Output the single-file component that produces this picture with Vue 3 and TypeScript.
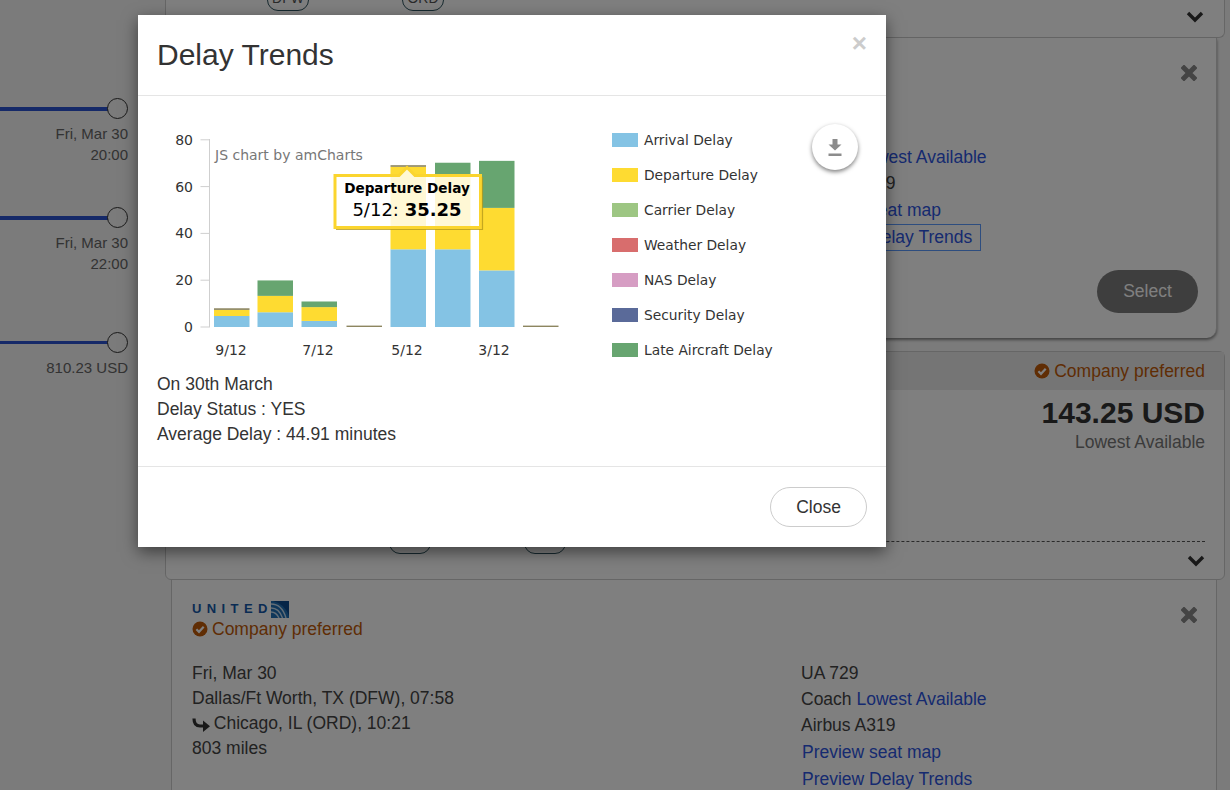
<script setup lang="ts">
interface Segment { value: number; color: string }
interface Bar { x: number; segments: Segment[] }

const BLUE = '#84c3e4'
const YELLOW = '#fedb31'
const GREEN = '#67a570'
const THIN = '#8d8660'

const baseY = 327
const scale = 2.34

const bars: Bar[] = [
	{ x: 214, segments: [{ value: 4.7, color: BLUE }, { value: 2.6, color: YELLOW }, { value: 0.7, color: THIN }] },
	{ x: 257.5, segments: [{ value: 6.3, color: BLUE }, { value: 7, color: YELLOW }, { value: 6.6, color: GREEN }] },
	{ x: 301.5, segments: [{ value: 2.6, color: BLUE }, { value: 5.9, color: YELLOW }, { value: 2.4, color: GREEN }] },
	{ x: 346.5, segments: [{ value: 0.6, color: THIN }] },
	{ x: 390.5, segments: [{ value: 33.2, color: BLUE }, { value: 35.25, color: YELLOW }, { value: 0.7, color: THIN }] },
	{ x: 435, segments: [{ value: 33.2, color: BLUE }, { value: 31.3, color: YELLOW }, { value: 5.7, color: GREEN }] },
	{ x: 479, segments: [{ value: 24.2, color: BLUE }, { value: 26.7, color: YELLOW }, { value: 20.1, color: GREEN }] },
	{ x: 523, segments: [{ value: 0.6, color: THIN }] },
]

function barRects(bar: Bar) {
	let used = 0
	return bar.segments.map((s) => {
		const height = s.value * scale
		used += height
		return { y: baseY - used, height, color: s.color }
	})
}

const yTicks = [0, 20, 40, 60, 80]
const xLabels = [
	{ x: 231, text: '9/12' },
	{ x: 318, text: '7/12' },
	{ x: 407, text: '5/12' },
	{ x: 494, text: '3/12' },
]

const legend = [
	{ name: 'Arrival Delay', color: BLUE },
	{ name: 'Departure Delay', color: YELLOW },
	{ name: 'Carrier Delay', color: '#9dc683' },
	{ name: 'Weather Delay', color: '#d86d6d' },
	{ name: 'NAS Delay', color: '#d69dc3' },
	{ name: 'Security Delay', color: '#5a6a99' },
	{ name: 'Late Aircraft Delay', color: GREEN },
]

const stops = [
	{ lines: ['Fri, Mar 30', '20:00'], cls: 'first' },
	{ lines: ['Fri, Mar 30', '22:00'], cls: 'second' },
	{ lines: ['810.23 USD'], cls: 'third' },
]
</script>

<template>
	<div class="page">
		<div class="timeline">
			<div v-for="stop in stops" :key="stop.lines.join()" class="stop" :class="stop.cls">
				<div class="track">
					<span class="line"></span>
					<span class="dot"></span>
				</div>
				<div v-for="l in stop.lines" :key="l" class="stop-label">{{ l }}</div>
			</div>
		</div>

		<div class="results">
			<section class="fare fare-top">
				<div class="fare-foot no-dash">
					<div class="route route-top">
						<span class="pill">DFW</span>
						<span class="connector"></span>
						<span class="pill">ORD</span>
					</div>
					<svg class="chevron" viewBox="0 0 18 12"><path d="M2 2 L9 9 L16 2" /></svg>
				</div>
			</section>

			<section class="detail detail-open">
				<div class="detail-head">
					<div class="brand-col"></div>
					<svg class="remove" viewBox="0 0 16 16"><path d="M3 3 L13 13 M13 3 L3 13" /></svg>
				</div>
				<div class="detail-cols">
					<div class="leg-col"></div>
					<div class="info-col">
						<div class="info-row">UA 1120</div>
						<div class="info-row">Coach <a class="link">Lowest Available</a></div>
						<div class="info-row">Airbus A319</div>
						<div class="link-row first-link"><a class="link block">Preview seat map</a></div>
						<div class="link-row"><a class="link block focused">Preview Delay Trends</a></div>
					</div>
				</div>
				<div class="actions"><button class="select">Select</button></div>
			</section>

			<section class="fare fare-mid">
				<div class="fare-head">
					<svg class="check" viewBox="0 0 16 16"><circle cx="8" cy="8" r="7.5" /><path d="M4.4 8.2 L7 10.8 L11.7 5.8" /></svg>
					<span>Company preferred</span>
				</div>
				<div class="price">143.25 USD</div>
				<div class="price-note">Lowest Available</div>
				<div class="fare-foot">
					<div class="route route-mid">
						<span class="pill">DFW</span>
						<span class="connector"></span>
						<span class="pill">ORD</span>
					</div>
					<svg class="chevron" viewBox="0 0 18 12"><path d="M2 2 L9 9 L16 2" /></svg>
				</div>
			</section>

			<section class="detail">
				<div class="detail-head">
					<div class="brand-col">
						<div class="brand">
							<span class="brand-name">UNITED</span>
							<svg class="globe" viewBox="0 0 18 17">
								<rect width="18" height="17" fill="#1f6fb5" />
								<path d="M0 3 Q11 3 15 17 M0 7 Q8 7 11.5 17 M0 11 Q5 11 8 17" fill="none" stroke="#c6dcee" stroke-width="1.4" />
								<path d="M2 0 L18 0 L18 15 Q14 3 2 0 Z" fill="#0d4a8e" />
							</svg>
						</div>
						<div class="preferred">
							<svg class="check" viewBox="0 0 16 16"><circle cx="8" cy="8" r="7.5" /><path d="M4.4 8.2 L7 10.8 L11.7 5.8" /></svg>
							<span>Company preferred</span>
						</div>
					</div>
					<svg class="remove" viewBox="0 0 16 16"><path d="M3 3 L13 13 M13 3 L3 13" /></svg>
				</div>
				<div class="detail-cols">
					<div class="leg-col">
						<div class="leg-row">Fri, Mar 30</div>
						<div class="leg-row">Dallas/Ft Worth, TX (DFW), 07:58</div>
						<div class="leg-row">
							<svg class="turn" viewBox="0 0 18 14"><path class="turn-line" d="M2 0.5 Q2 8 8 8 L12 8" /><path class="turn-head" d="M11 2.5 L18 8.3 L11 14 Z" /></svg>
							Chicago, IL (ORD), 10:21
						</div>
						<div class="leg-row">803 miles</div>
					</div>
					<div class="info-col">
						<div class="info-row">UA 729</div>
						<div class="info-row">Coach <a class="link">Lowest Available</a></div>
						<div class="info-row">Airbus A319</div>
						<div class="link-row first-link"><a class="link block">Preview seat map</a></div>
						<div class="link-row"><a class="link block">Preview Delay Trends</a></div>
					</div>
				</div>
			</section>
		</div>

		<div class="backdrop"></div>

		<div class="modal-wrap">
			<div class="modal">
				<header class="modal-head">
					<h4>Delay Trends</h4>
					<span class="modal-x">×</span>
				</header>
				<div class="modal-body">
					<div class="chart-row">
						<svg class="chart" viewBox="157 125 440 240" width="440" height="240">
							<g v-for="t in yTicks" :key="t">
								<line x1="200.5" x2="210" :y1="baseY - t * scale" :y2="baseY - t * scale" stroke="#cfcfcf" />
								<text x="193" :y="baseY - t * scale + 5" text-anchor="end" class="tick">{{ t }}</text>
							</g>
							<line x1="209.5" x2="209.5" y1="139" y2="327" stroke="#cfcfcf" />
							<g v-for="(bar, i) in bars" :key="i">
								<rect
									v-for="(r, j) in barRects(bar)"
									:key="j"
									:x="bar.x"
									:y="r.y"
									width="35.5"
									:height="r.height"
									:fill="r.color"
								/>
							</g>
							<text v-for="l in xLabels" :key="l.text" :x="l.x" y="355" text-anchor="middle" class="tick">{{ l.text }}</text>
							<text x="215" y="160" class="credit">JS chart by amCharts</text>

							<path
								d="M335 175.5 L399 175.5 L407 167.5 L415 175.5 L480.5 175.5 L480.5 227.5 L335 227.5 Z"
								fill="#ffffff"
								fill-opacity="0.8"
								stroke="#fbd52e"
								stroke-width="3"
							/>
							<path d="M482.5 177 L482.5 229.5 L336 229.5" fill="none" stroke="#b59a1c" stroke-width="1.2" opacity="0.8" />
							<text x="407" y="193" text-anchor="middle" class="tip-title">Departure Delay</text>
							<text x="407" y="216" text-anchor="middle" class="tip-value">5/12: <tspan class="tip-strong">35.25</tspan></text>
						</svg>
						<ul class="legend">
							<li v-for="item in legend" :key="item.name">
								<span class="swatch" :style="{ background: item.color }"></span>
								<span>{{ item.name }}</span>
							</li>
						</ul>
						<button class="download" aria-label="Download">
							<svg viewBox="0 0 14 17" width="14" height="17">
								<path d="M4.5 0 H9.5 V5.5 H13.5 L7 11.5 L0.5 5.5 H4.5 Z" fill="#8c8c8c" />
								<rect x="0.5" y="14.5" width="13" height="2.5" fill="#8c8c8c" />
							</svg>
						</button>
					</div>
					<div class="status">
						<div>On 30th March</div>
						<div>Delay Status : YES</div>
						<div>Average Delay : 44.91 minutes</div>
					</div>
				</div>
				<footer class="modal-foot">
					<button class="close-btn">Close</button>
				</footer>
			</div>
		</div>
	</div>
</template>

<style>
html, body {
	margin: 0;
	background: #f6f6f6;
}
</style>

<style scoped>
.page {
	position: relative;
	display: flex;
	width: 1230px;
	height: 790px;
	overflow: hidden;
	font-family: "Liberation Sans", Arial, sans-serif;
	font-size: 17.5px;
	color: #333;
	background: #f6f6f6;
}

/* Left timeline */
.timeline {
	width: 128px;
	padding-top: 98px;
	flex: none;
}
.stop.first { height: 109px; }
.stop.second { height: 125px; }
.track {
	display: flex;
	align-items: center;
	height: 21px;
}
.line {
	flex: 1;
	height: 4px;
	background: #2a52d0;
}
.third .line { height: 3px; }
.dot {
	width: 21px;
	height: 21px;
	box-sizing: border-box;
	border: 1.5px solid #333;
	border-radius: 50%;
	margin-left: -1px;
	background: #f6f6f6;
}
.stop-label {
	text-align: right;
	font-size: 15px;
	line-height: 21px;
	color: #666;
}
.track + .stop-label { margin-top: 4px; }

/* Result cards */
.results {
	margin-left: 37px;
	width: 1060px;
	flex: none;
}
.fare {
	background: #fff;
	border: 1px solid #ccc;
	border-radius: 0 0 6px 6px;
	box-sizing: border-box;
}
.fare-top {
	height: 39px;
	margin-top: -1px;
	border-top: none;
}
.fare-mid {
	height: 229px;
	margin-top: 13px;
	border-radius: 6px;
}
.fare-head {
	display: flex;
	justify-content: flex-end;
	align-items: center;
	gap: 4px;
	height: 38px;
	padding: 0 19px;
	background: #ebebeb;
	color: #c05a08;
}
.price {
	margin-top: 5px;
	padding-right: 19px;
	text-align: right;
	font-size: 30px;
	font-weight: bold;
	line-height: 35px;
	color: #333;
}
.price-note {
	padding-right: 19px;
	text-align: right;
	line-height: 24px;
	color: #777;
}
.fare-foot {
	display: flex;
	justify-content: space-between;
	margin: 87px 19px 0;
	border-top: 1px dashed #555;
	height: 38px;
}
.fare-foot.no-dash {
	margin-top: 0;
	border-top: none;
}
.route {
	display: flex;
	align-items: center;
	width: 177px;
	height: 26px;
}
.route-top { margin: -14px 0 0 82px; }
.route-mid { margin: -14px 0 0 204px; }
.pill {
	width: 42px;
	height: 26px;
	box-sizing: border-box;
	border: 1px solid #2f5560;
	border-radius: 11px;
	text-align: center;
	font-size: 14px;
	line-height: 24px;
	color: #555;
	flex: none;
}
.connector {
	flex: 1;
	height: 2px;
	margin-top: 1px;
	background: #3f6f7c;
}
.chevron {
	width: 18px;
	height: 12px;
	margin-top: 13px;
	fill: none;
	stroke: #333;
	stroke-width: 3.4;
}
.fare-top .chevron { margin-top: 12px; margin-right: 1px; }

.detail {
	box-sizing: border-box;
	margin: 0 8px 0 6px;
	padding: 20px 19px 0 20px;
	background: #fff;
	border-left: 1px solid #ccc;
	border-right: 1px solid #ccc;
}
.detail-open {
	height: 300px;
	border-radius: 0 0 10px 10px;
	box-shadow: 0 2px 3px rgba(0, 0, 0, 0.45);
}
.detail-head {
	display: flex;
	justify-content: space-between;
	height: 60px;
}
.brand-col { width: 400px; }
.brand {
	display: flex;
	align-items: center;
	height: 17px;
}
.brand-name {
	margin-right: -2px;
	font-size: 13px;
	font-weight: bold;
	letter-spacing: 5.4px;
	color: #1558a8;
}
.globe {
	width: 18px;
	height: 17px;
	margin-top: 2px;
}
.preferred {
	display: flex;
	align-items: center;
	gap: 4px;
	margin-top: 3px;
	height: 18px;
	color: #c05a08;
}
.check {
	width: 16px;
	height: 16px;
	flex: none;
}
.check circle { fill: #c05a08; }
.check path {
	fill: none;
	stroke: #fff;
	stroke-width: 2.2;
}
.remove {
	width: 16px;
	height: 16px;
	margin-top: 7px;
	fill: none;
	stroke: #888;
	stroke-width: 5;
	stroke-linecap: square;
}
.detail-cols { display: flex; }
.leg-col {
	width: 609px;
	margin-top: 1px;
	flex: none;
}
.leg-row { line-height: 25px; color: #444; }
.turn {
	width: 18px;
	height: 14px;
	margin-right: -1px;
	vertical-align: -3px;
}
.turn-line { fill: none; stroke: #333; stroke-width: 3.2; }
.turn-head { fill: #333; }
.info-row {
	line-height: 26px;
	color: #444;
}
.link-row {
	height: 27px;
	line-height: 25px;
}
.first-link { margin-top: 1px; }
.link { color: #2d55e0; }
.link.block {
	display: inline-block;
	box-sizing: border-box;
	height: 27px;
	padding: 0 8px 0 0;
	border: 1px solid transparent;
}
.link.focused { border-color: #5b9bff; }
.actions {
	display: flex;
	justify-content: flex-end;
	margin-top: 19px;
}
.select {
	width: 101px;
	height: 43px;
	margin-right: -1px;
	border: none;
	border-radius: 22px;
	background: #7c7c7c;
	color: #fff;
	font: 17.5px "Liberation Sans", Arial, sans-serif;
}

/* Modal */
.backdrop {
	position: absolute;
	inset: 0;
	background: rgba(0, 0, 0, 0.5);
}
.modal-wrap {
	position: absolute;
	left: 138px;
	top: 15px;
}
.modal {
	width: 748px;
	background: #fff;
	box-shadow: 0 5px 15px rgba(0, 0, 0, 0.5);
}
.modal-head {
	display: flex;
	justify-content: space-between;
	align-items: flex-start;
	height: 81px;
	box-sizing: border-box;
	padding: 0 19px 0 19px;
	border-bottom: 1px solid #e5e5e5;
}
.modal-head h4 {
	margin: 0;
	font-size: 30px;
	font-weight: normal;
	line-height: 80px;
	color: #333;
}
.modal-x {
	margin-top: 15px;
	font-size: 26px;
	font-weight: bold;
	line-height: 26px;
	color: #ccc;
}
.modal-body {
	padding: 29px 19px 19px;
}
.chart-row {
	position: relative;
	display: flex;
	height: 240px;
}
.chart {
	display: block;
	flex: none;
}
.tick {
	font: 14px "DejaVu Sans", Verdana, sans-serif;
	fill: #333;
}
.credit {
	font: 14px "DejaVu Sans", Verdana, sans-serif;
	fill: #777;
}
.tip-title {
	font: bold 13.6px "DejaVu Sans", Verdana, sans-serif;
	fill: #000;
}
.tip-value {
	font: 18px "DejaVu Sans", Verdana, sans-serif;
	fill: #000;
}
.tip-strong { font-weight: bold; }
.legend {
	list-style: none;
	margin: -2.5px 0 0 15px;
	padding: 0;
	font: 13.8px "DejaVu Sans", Verdana, sans-serif;
	color: #333;
}
.legend li {
	display: flex;
	align-items: center;
	gap: 6px;
	height: 35px;
}
.swatch {
	width: 26px;
	height: 14px;
	flex: none;
}
.download {
	position: absolute;
	left: 655px;
	top: -1px;
	width: 46px;
	height: 46px;
	padding: 0;
	border: none;
	border-radius: 50%;
	background: #fff;
	box-shadow: 0 2px 4px rgba(0, 0, 0, 0.5);
	display: flex;
	align-items: center;
	justify-content: center;
}
.status {
	margin-top: 7px;
	line-height: 25px;
	color: #333;
}
.modal-foot {
	display: flex;
	justify-content: flex-end;
	box-sizing: border-box;
	height: 81px;
	padding: 20px 19px 0;
	border-top: 1px solid #e5e5e5;
}
.close-btn {
	width: 97px;
	height: 40px;
	border: 1px solid #ccc;
	border-radius: 21px;
	background: #fff;
	color: #333;
	font: 17.5px "Liberation Sans", Arial, sans-serif;
}
</style>
